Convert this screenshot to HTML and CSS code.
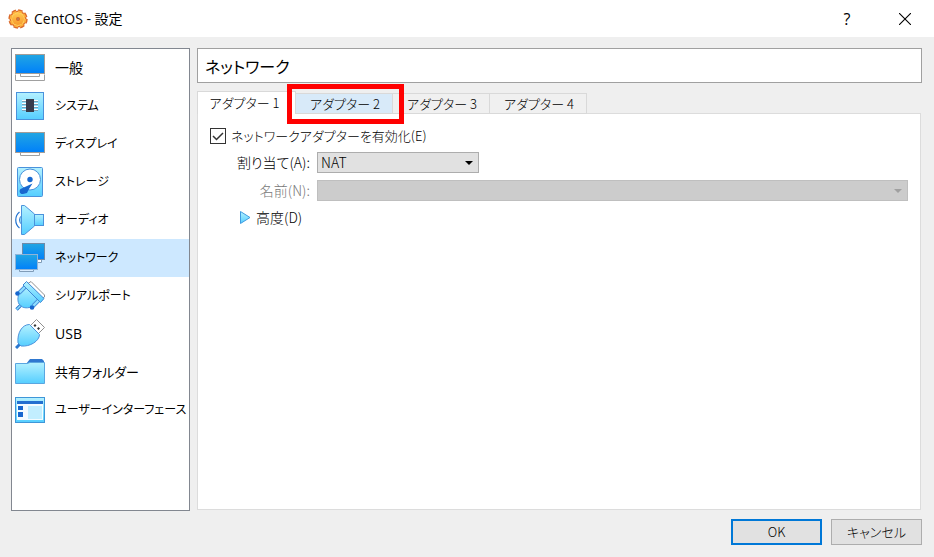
FILE: index.html
```html
<!DOCTYPE html>
<html lang="ja">
<head>
    <meta charset="UTF-8">
    <meta name="viewport" content="width=device-width, initial-scale=1.0">
    <title>CentOS - 設定</title>
    <link rel="stylesheet" href="styles.css">
</head>
<body>
    <!-- shared gradients -->
    <svg class="defs" width="0" height="0" aria-hidden="true">
        <defs>
            <linearGradient id="screen" x1="0" y1="0" x2="0" y2="1">
                <stop offset="0" stop-color="#22a6e2"/>
                <stop offset="1" stop-color="#0080fa"/>
            </linearGradient>
            <linearGradient id="light" x1="0" y1="0" x2="0" y2="1">
                <stop offset="0" stop-color="#b4f1ff"/>
                <stop offset="1" stop-color="#55ceff"/>
            </linearGradient>
            <linearGradient id="gear" x1="0" y1="0" x2="0" y2="1">
                <stop offset="0" stop-color="#ffc850"/>
                <stop offset="1" stop-color="#f79a2c"/>
            </linearGradient>
        </defs>
    </svg>

    <header class="titlebar">
        <svg class="app-icon" viewBox="0 0 20 20">
            <circle cx="10" cy="10" r="8.6" fill="#e0702c"/>
            <circle cx="10" cy="10" r="8.8" fill="none" stroke="#d9682a" stroke-width="1.8" stroke-dasharray="4.6 2.3"/>
            <circle cx="10" cy="10" r="7" fill="#ffd766"/>
            <circle cx="10" cy="10" r="7.4" fill="none" stroke="#fdb03c" stroke-width="1.8" stroke-dasharray="3.8 2"/>
            <circle cx="10" cy="10" r="6" fill="url(#gear)"/>
            <circle cx="10" cy="10" r="2" fill="#d9682a"/>
            <circle cx="10" cy="10" r="0.9" fill="#b5835a"/>
        </svg>
        <h1>CentOS - 設定</h1>
        <button class="win-btn help" aria-label="ヘルプ">?</button>
        <button class="win-btn" aria-label="閉じる">
            <svg width="12" height="12" viewBox="0 0 12 12"><path d="M0 0L12 12M12 0L0 12" stroke="#000" stroke-width="1.1"/></svg>
        </button>
    </header>

    <main>
        <nav>
            <a href="#" class="large">
                <svg viewBox="0 0 30 30">
                    <path d="M.5 21.5V27.5H29.5V21.5" fill="#fff" stroke="#a0a0a0"/>
                    <path d="M5.5 21V23.5H24.5V21" fill="#fff" stroke="#a0a0a0"/>
                    <rect x=".5" y="1.5" width="29" height="19" fill="url(#screen)" stroke="#a39d98"/>
                </svg>
                <span>一般</span>
            </a>
            <a href="#">
                <svg viewBox="0 0 30 30">
                    <rect x="1.5" y="1.5" width="27" height="27" fill="url(#light)" stroke="#4a92dc"/>
                    <path d="M7 9.5H23M7 12.5H23M7 15.5H23M7 18.5H23" stroke="#fff"/>
                    <path d="M7 10.5H23M7 13.5H23M7 16.5H23M7 19.5H23" stroke="#7ba2b8"/>
                    <rect x="11" y="8" width="8" height="13" fill="#383c4c"/>
                </svg>
                <span>システム</span>
            </a>
            <a href="#">
                <svg viewBox="0 0 30 30">
                    <path d="M5.5 24V26.5H24.5V24" fill="#fff" stroke="#a0a0a0"/>
                    <rect x=".5" y="3.5" width="29" height="20" fill="url(#screen)" stroke="#a39d98"/>
                </svg>
                <span>ディスプレイ</span>
            </a>
            <a href="#">
                <svg viewBox="0 0 30 30">
                    <rect x="2.5" y=".5" width="25" height="29" rx="1" fill="url(#light)" stroke="#4a92dc"/>
                    <circle cx="15" cy="12.5" r="10.5" fill="#fff" stroke="#4a92dc"/>
                    <circle cx="15" cy="12.5" r="2.7" fill="#1767cf"/>
                    <path d="M17.5 16.5L5.5 22C3.5 24 5 27.5 8 27L12 26L14 22Z" fill="#1767cf"/>
                </svg>
                <span>ストレージ</span>
            </a>
            <a href="#">
                <svg viewBox="0 0 30 30">
                    <path d="M4.5 7C-.5 11 -.5 19 4.5 23" fill="none" stroke="#2574d0" stroke-width="1.2"/>
                    <path d="M6.5 11C4 12 4 18 6.5 19" fill="#9ce6ff" stroke="#2574d0"/>
                    <rect x="19" y="9.5" width="9.5" height="11" fill="url(#light)" stroke="#4a92dc"/>
                    <path d="M6.5 .5H9.5L19.5 9V21L9.5 29.5H6.5Z" fill="url(#light)" stroke="#4a92dc"/>
                </svg>
                <span>オーディオ</span>
            </a>
            <a href="#" class="active">
                <svg viewBox="0 0 30 30">
                    <path d="M20 17V19.5H26.5V17" fill="#fff" stroke="#7f9cb8"/>
                    <rect x="7.5" y=".5" width="22" height="16" fill="url(#screen)" stroke="#6f8ba8"/>
                    <path d="M4.5 26V28.5H18.5V26" fill="#d9ecff" stroke="#7f9cb8"/>
                    <rect x=".5" y="11.5" width="22" height="15" fill="url(#screen)" stroke="#8fb4d8"/>
                </svg>
                <span>ネットワーク</span>
            </a>
            <a href="#">
                <svg viewBox="0 0 30 30">
                    <path d="M13 2.5L16 .5L29.5 14V16L26 18Z" fill="#fff" stroke="#909090"/>
                    <path d="M1.5 28.5L6 24" stroke="#2b78d0" stroke-width="3.4"/>
                    <path d="M1.5 28.5L6 24" stroke="#8edfff" stroke-width="1.4"/>
                    <path d="M9 5L5 10C3 14 2 19 4 23L7.5 26C12 28 17 26 20 24L25 20Z" fill="url(#light)" stroke="#4a92dc"/>
                    <path d="M10 6L4 12M24 19L18 25" stroke="#4a92dc" stroke-width="4"/>
                    <path d="M10 6L4 12M24 19L18 25" stroke="#8fe0ff" stroke-width="2"/>
                    <path d="M8 4L11.5 .5L29 17.5L25.5 21.5Z" fill="url(#light)" stroke="#3f88d6"/>
                    <circle cx="2.5" cy="12.5" r="2.3" fill="#1767cf"/>
                    <circle cx="17" cy="26.5" r="2.3" fill="#1767cf"/>
                </svg>
                <span>シリアルポート</span>
            </a>
            <a href="#" class="large">
                <svg viewBox="0 0 30 30">
                    <path d="M15.5 6.5L21.5 .5L29.5 8.5L23.5 14.5Z" fill="#fff" stroke="#909090"/>
                    <path d="M18.5 6.5L20 5L21.5 6.5L20 8ZM22 9.5L23.5 8L25 9.5L23.5 11Z" fill="#333"/>
                    <path d="M1 29L5 25" stroke="#2b78d0" stroke-width="3"/>
                    <path d="M3 24C2 14 7 5.5 14.5 5.5L24.5 15.5C24.5 22 15 28 6 27Z" fill="url(#light)" stroke="#4a92dc"/>
                </svg>
                <span>USB</span>
            </a>
            <a href="#" class="medium">
                <svg viewBox="0 0 30 30">
                    <path d="M11 7L15 2H27L29 4V8H11Z" fill="#2f78d0"/>
                    <path d="M.5 6.5H12L15 5.5H29.5V26.5H.5Z" fill="url(#light)" stroke="#5aa6e0"/>
                </svg>
                <span>共有フォルダー</span>
            </a>
            <a href="#">
                <svg viewBox="0 0 30 30">
                    <rect x=".5" y="2.5" width="29" height="25" fill="url(#light)" stroke="#3f96d8"/>
                    <rect x="2" y="9" width="26" height="16" fill="#f4fcff"/>
                    <rect x="2" y="6" width="26" height="3" fill="#2470d0"/>
                    <rect x="3" y="11" width="5" height="4" fill="#1767cf"/>
                    <rect x="3" y="17" width="5" height="5" fill="#1767cf"/>
                    <rect x="13" y="11" width="14" height="13" fill="#c2eeff"/>
                </svg>
                <span>ユーザーインターフェース</span>
            </a>
        </nav>

        <section class="content">
            <h2>ネットワーク</h2>
            <div class="tabs" role="tablist">
                <button role="tab" class="tab selected" aria-selected="true">アダプター 1</button>
                <div class="marked">
                    <button role="tab" class="tab hover">アダプター 2</button>
                </div>
                <button role="tab" class="tab">アダプター 3</button>
                <button role="tab" class="tab">アダプター 4</button>
            </div>
            <div class="pane">
                <div class="enable">
                    <input type="checkbox" id="enable" checked>
                    <label for="enable">ネットワークアダプターを有効化(E)</label>
                </div>
                <div class="form">
                    <label for="attached">割り当て(A):</label>
                    <select id="attached" class="short">
                        <option>NAT</option>
                    </select>
                    <label for="name" class="disabled">名前(N):</label>
                    <select id="name" disabled></select>
                </div>
                <button class="advanced">
                    <svg width="11" height="13" viewBox="0 0 11 13"><path d="M.5 .5L10 6.5L.5 12.5Z" fill="url(#light)" stroke="#3f9be0"/></svg>
                    高度(D)
                </button>
            </div>
        </section>
    </main>

    <footer>
        <button class="btn primary">OK</button>
        <button class="btn">キャンセル</button>
    </footer>
</body>
</html>
```
FILE: styles.css
```css
* {
    box-sizing: border-box;
}

body {
    margin: 0;
    min-height: 100vh;
    display: flex;
    flex-direction: column;
    background-color: #efefef;
    color: #000;
    font-family: "Noto Sans CJK JP", sans-serif;
    font-size: 13px;
    font-weight: 300;
    line-height: 20px;
    font-feature-settings: "palt";
}

button,
select {
    font: inherit;
    font-feature-settings: inherit;
    color: inherit;
}

.defs {
    position: absolute;
}

/* title bar */
.titlebar {
    display: flex;
    align-items: center;
    height: 37px;
    padding-left: 8px;
    background-color: #fff;
}

.app-icon {
    width: 20px;
    height: 20px;
}

h1 {
    flex: 1;
    margin: 0 0 0 6px;
    font-family: "Open Sans", "Noto Sans CJK JP", sans-serif;
    font-size: 14px;
    font-weight: 400;
}

.win-btn {
    display: flex;
    align-items: center;
    justify-content: center;
    width: 58px;
    height: 37px;
    padding: 0;
    border: none;
    background: none;
}

.help {
    font-family: "Open Sans", sans-serif;
    font-size: 16px;
    font-weight: 400;
}

/* body */
main {
    flex: 1;
    display: flex;
    gap: 7px;
    padding: 11px 12px 0 11px;
}

nav {
    width: 179px;
    border: 1px solid #828790;
    background-color: #fff;
}

nav a {
    display: flex;
    align-items: center;
    gap: 10px;
    height: 38px;
    padding-left: 3px;
    color: #000;
    font-family: "Open Sans", "Noto Sans CJK JP", sans-serif;
    font-size: 12px;
    font-weight: 400;
    line-height: 22px;
    text-decoration: none;
    white-space: nowrap;
}

nav a.medium {
    font-size: 13px;
}

nav a.large {
    font-size: 14px;
}

nav a.active {
    background-color: #cde8ff;
}

nav svg {
    flex: none;
    width: 30px;
    height: 30px;
}

.content {
    flex: 1;
    display: flex;
    flex-direction: column;
}

h2 {
    height: 35px;
    margin: 0 0 8px;
    padding-left: 7px;
    border: 1px solid #a0a0a0;
    background-color: #fff;
    font-size: 16px;
    font-weight: 400;
    line-height: 34px;
}

/* tabs */
.tabs {
    position: relative;
    display: flex;
    align-items: flex-end;
    margin-bottom: -1px;
}

.tab {
    width: 97px;
    height: 21px;
    padding: 0 0 0 2px;
    border: 1px solid #d9d9d9;
    border-left: none;
    background-color: #f0f0f0;
    line-height: 18px;
}

.tab.selected {
    width: 99px;
    height: 23px;
    padding: 0 4px 0 0;
    border-left: 1px solid #d9d9d9;
    border-bottom: none;
    background-color: #fff;
}

.tab.hover {
    background-color: #d8eaf9;
}

.marked {
    position: relative;
    display: flex;
}

.marked::after {
    content: "";
    position: absolute;
    inset: -9px -11px -10px -9px;
    border: 5px solid #f00;
    pointer-events: none;
}

.pane {
    flex: 1;
    margin: 0 1px 1px 0;
    padding: 12px;
    border: 1px solid #dcdcdc;
    background-color: #fff;
}

.enable {
    display: flex;
    align-items: center;
    gap: 5px;
    height: 20px;
}

input[type="checkbox"] {
    appearance: none;
    width: 16px;
    height: 16px;
    margin: 0;
    border: 1px solid #333;
    background-color: #fff;
}

input[type="checkbox"]:checked {
    background-image: url("data:image/svg+xml,%3Csvg xmlns='http://www.w3.org/2000/svg' viewBox='0 0 28 28'%3E%3Cpath d='M4 14L11 21L24 8' fill='none' stroke='%23333' stroke-width='3'/%3E%3C/svg%3E");
}

.form {
    display: grid;
    grid-template-columns: 100px 1fr;
    gap: 7px;
    margin-top: 6px;
    font-size: 14px;
}

.form label {
    text-align: right;
}

select {
    appearance: none;
    width: 100%;
    height: 21px;
    padding: 0 3px;
    border: 1px solid #adadad;
    border-radius: 0;
    background: #e1e1e1 url("data:image/svg+xml,%3Csvg xmlns='http://www.w3.org/2000/svg' viewBox='0 0 8 4'%3E%3Cpath d='M0 0H8L4 4Z'/%3E%3C/svg%3E") no-repeat right 5px center / 8px 4px;
    line-height: 19px;
}

.short {
    width: 162px;
}

select:disabled {
    border-color: #bfbfbf;
    background-color: #ccc;
    background-image: url("data:image/svg+xml,%3Csvg xmlns='http://www.w3.org/2000/svg' viewBox='0 0 8 4'%3E%3Cpath d='M0 0H8L4 4Z' fill='%23a0a0a0'/%3E%3C/svg%3E");
    opacity: 1;
}

.disabled {
    color: #787878;
}

.advanced {
    display: flex;
    align-items: center;
    gap: 5px;
    margin: 6px 0 0 30px;
    padding: 0;
    border: none;
    background: none;
    font-size: 14px;
}

/* buttons */
footer {
    display: flex;
    justify-content: flex-end;
    gap: 9px;
    padding: 8px 12px 12px;
}

.btn {
    width: 91px;
    height: 26px;
    padding: 0;
    border: 1px solid #adadad;
    background-color: #e1e1e1;
}

.btn.primary {
    border: 2px solid #0078d7;
}
```
